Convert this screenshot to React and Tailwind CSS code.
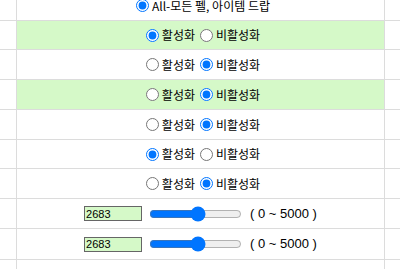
import React, { useState } from 'react';

const FONT = { fontFamily: '"Noto Sans CJK KR", "Liberation Sans", sans-serif' };

const ROWS = [
  { type: 'all', h: 'h-[30px]' },
  { type: 'toggle', on: true, green: true, h: 'h-[29px]' },
  { type: 'toggle', on: false, h: 'h-[30px]' },
  { type: 'toggle', on: false, green: true, h: 'h-[30px]' },
  { type: 'toggle', on: false, h: 'h-[30px]' },
  { type: 'toggle', on: true, h: 'h-[29px]' },
  { type: 'toggle', on: false, h: 'h-[30px]' },
  { type: 'range', value: 2683, h: 'h-[30px]' },
  { type: 'range', value: 2683, h: 'h-[31px]' },
  { type: 'range', value: 80, h: 'h-[38px]' },
];

function Radio({ name, checked, label, onChange }) {
  return (
    <label className="inline-flex items-center">
      <input
        type="radio"
        name={name}
        checked={checked}
        onChange={onChange}
        className="m-0 mr-[3px] ml-[5px] h-[13px] w-[13px]"
      />
      <span>{label}</span>
    </label>
  );
}

function RangeCell({ initial }) {
  const [value, setValue] = useState(initial);
  return (
    <div className="flex items-center">
      <input
        type="text"
        value={value}
        onChange={(e) => setValue(Number(e.target.value) || 0)}
        className="h-[15px] w-[58px] border border-[#666] bg-[#d5f9c8] px-[1px] text-[11px] leading-none text-black outline-none"
        style={{ fontFamily: '"Liberation Sans", sans-serif' }}
      />
      <input
        type="range"
        min={0}
        max={5000}
        value={value}
        onChange={(e) => setValue(Number(e.target.value))}
        className="ml-[7px] w-[93px]"
      />
      <span
        className="ml-[8px] text-[13px] text-black"
        style={{ fontFamily: '"Liberation Sans", sans-serif' }}
      >
        ( 0 ~ 5000 )
      </span>
    </div>
  );
}

function ToggleCell({ index, initial }) {
  const [on, setOn] = useState(initial);
  return (
    <div className="flex items-center">
      <Radio name={`t${index}`} checked={on} label="활성화" onChange={() => setOn(true)} />
      <Radio name={`t${index}`} checked={!on} label="비활성화" onChange={() => setOn(false)} />
    </div>
  );
}

export default function App() {
  return (
    <div className="h-[269px] w-[400px] overflow-hidden bg-white text-[12px] text-black" style={FONT}>
      <div className="-mt-[9px]">
        {ROWS.map((row, i) => (
          <div key={i} className={`flex ${row.h} border-b border-[#dcdcdc]`}>
            <div className="w-[17px] shrink-0 border-r border-[#dcdcdc]" />
            <div
              className={`flex flex-1 items-center justify-center border-r border-[#dcdcdc] ${row.green ? 'bg-[#d5f9c8]' : ''}`}
            >
              {row.type === 'all' && (
                <Radio name="all" checked label="All-모든 펠, 아이템 드랍" onChange={() => {}} />
              )}
              {row.type === 'toggle' && <ToggleCell index={i} initial={row.on} />}
              {row.type === 'range' && <RangeCell initial={row.value} />}
            </div>
            <div className="w-[15px] shrink-0" />
          </div>
        ))}
      </div>
    </div>
  );
}
